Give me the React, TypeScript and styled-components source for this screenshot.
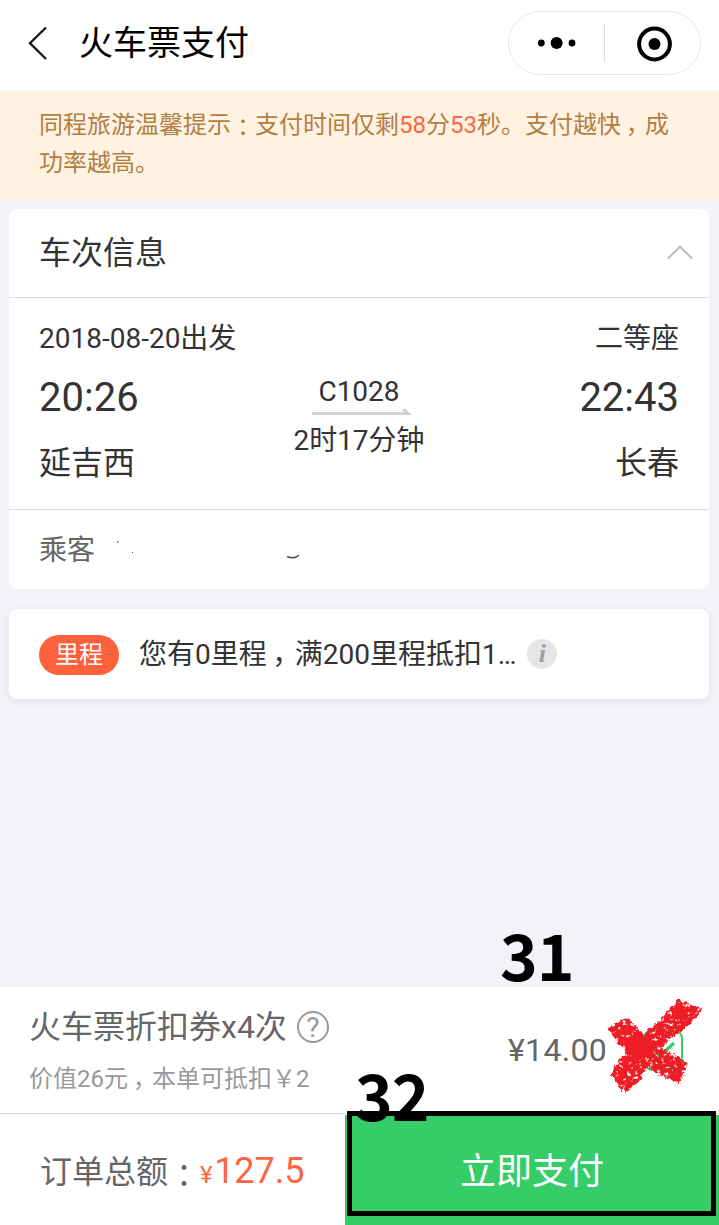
import React from 'react';
import styled, { createGlobalStyle } from 'styled-components';

const GlobalStyle = createGlobalStyle`
  * { box-sizing: border-box; }
  body {
    margin: 0;
    background: #f2f3f8;
    font-family: Roboto, "Noto Sans CJK SC", sans-serif;
    color: #333;
  }
`;

const Page = styled.div`
  position: relative;
  display: flex;
  flex-direction: column;
  width: 719px;
  height: 1225px;
  background: #f2f3f8;
  overflow: hidden;
`;

const NavBar = styled.header`
  display: flex;
  align-items: center;
  height: 91px;
  padding: 0 18px 5px 26px;
  background: #fff;
`;

const BackIcon = styled.svg`
  display: block;
  flex: none;
  width: 24px;
  height: 36px;
`;

const NavTitle = styled.h1`
  flex: 1;
  margin: 0 0 0 29px;
  font-size: 34px;
  line-height: 40px;
  font-weight: 400;
  color: #000;
`;

const Capsule = styled.div`
  display: flex;
  align-items: center;
  width: 193px;
  height: 64px;
  border: 1px solid #e6e6e6;
  border-radius: 32px;
`;

const CapsuleIcon = styled.svg`
  display: block;
  flex: 1;
  height: 62px;
`;

const CapsuleRule = styled.span`
  width: 1px;
  height: 38px;
  background: #dcdcdc;
`;

const Notice = styled.p`
  height: 108px;
  margin: 0;
  padding: 15px 40px 0 39px;
  background: #fff2e0;
  color: #b07f47;
  font-size: 24px;
  line-height: 38px;
`;

const Accent = styled.span`
  color: #ff6540;
`;

const Comma = styled.span`
  margin-left: 0.2em;
  margin-right: -0.2em;
`;

const Colon = styled.span`
  font-family: "Noto Sans CJK TC", sans-serif;
  line-height: 0;
  vertical-align: -0.12em;
`;

const Card = styled.section<{ $raised?: boolean }>`
  margin: ${p => (p.$raised ? '20px' : '10px')} 10px 0 9px;
  background: #fff;
  border-radius: 8px;
  box-shadow: ${p => (p.$raised ? '0 2px 10px rgba(0, 0, 0, 0.07)' : 'none')};
`;

const CardHead = styled.div`
  display: flex;
  align-items: center;
  justify-content: space-between;
  height: 89px;
  padding: 0 16px 0 30px;
  border-bottom: 1px solid #dcdcdc;
  font-size: 32px;
  line-height: 40px;
`;

const Chevron = styled.svg`
  display: block;
  width: 26px;
  height: 16px;
  margin-bottom: 2px;
`;

const Trip = styled.div`
  display: flex;
  justify-content: space-between;
  height: 212px;
  padding: 21px 30px 0 30px;
  border-bottom: 1px solid #dcdcdc;
`;

const TripEnd = styled.div<{ $align: 'left' | 'right' }>`
  width: 220px;
  text-align: ${p => p.$align};
`;

const Meta = styled.div`
  font-size: 28px;
  line-height: 40px;
`;

const Clock = styled.div`
  margin-top: 15px;
  font-size: 40px;
  line-height: 48px;
`;

const Station = styled.div`
  margin-top: 21px;
  font-size: 32px;
  line-height: 40px;
`;

const TripMiddle = styled.div`
  display: flex;
  flex-direction: column;
  align-items: center;
  padding-top: 53px;
`;

const TripArrow = styled.svg`
  display: block;
  margin: -4px 0 5px 5px;
  width: 100px;
  height: 8px;
`;

const PassengerRow = styled.div`
  display: flex;
  align-items: center;
  height: 79px;
  padding: 2px 0 0 30px;
  font-size: 28px;
  line-height: 40px;
  color: #666;
`;

const Remnants = styled.svg`
  display: block;
  margin: -4px 0 0 16px;
  width: 200px;
  height: 40px;
`;

const MileageRow = styled.div`
  display: flex;
  align-items: center;
  height: 90px;
  padding: 1px 0 0 30px;
  font-size: 28px;
  line-height: 40px;
`;

const Badge = styled.span`
  width: 80px;
  height: 40px;
  margin: 1px 20px 0 0;
  border-radius: 20px;
  background: #ff613c;
  color: #fff;
  font-size: 24px;
  line-height: 40px;
  text-align: center;
`;

const InfoDot = styled.span`
  width: 30px;
  height: 30px;
  margin: 0 0 1px 11px;
  border-radius: 50%;
  background: #e6e6e6;
  color: #a0a0a0;
  font: italic bold 26px/29px "Liberation Serif", serif;
  text-align: center;
`;

const Spacer = styled.div`
  flex: 1;
`;

const Coupon = styled.section`
  display: flex;
  justify-content: space-between;
  height: 127px;
  padding: 20px 36px 0 29px;
  background: #fff;
  border-bottom: 1px solid #dcdcdc;
`;

const CouponName = styled.div`
  display: flex;
  align-items: center;
  font-size: 32px;
  line-height: 40px;
  color: #666;
`;

const CouponNote = styled.div`
  margin-top: 14px;
  font-size: 24px;
  line-height: 36px;
  color: #999;
`;

const HelpIcon = styled.span`
  width: 32px;
  height: 32px;
  margin: 0 0 0 10px;
  border: 2px solid #999;
  border-radius: 50%;
  color: #999;
  font-size: 28px;
  line-height: 29px;
  text-align: center;
`;

const CouponPick = styled.div`
  display: flex;
  align-items: center;
  height: 86px;
  gap: 36px;
  font-size: 32px;
  letter-spacing: 0.3px;
  color: #666;
`;

const CheckBox = styled.svg`
  display: block;
  width: 40px;
  height: 40px;
`;

const PayBar = styled.footer`
  display: flex;
  height: 111px;
  background: #fff;
`;

const Total = styled.div`
  display: flex;
  align-items: baseline;
  width: 345px;
  padding: 35px 0 0 40px;
  font-size: 32px;
  line-height: 44px;
  color: #666;
  white-space: nowrap;
`;

const Price = styled.span<{ $size: number }>`
  color: #ff6540;
  font-size: ${p => p.$size}px;
  letter-spacing: ${p => (p.$size < 30 ? 1.5 : 0)}px;
`;

const PayButton = styled.button`
  flex: 1;
  margin-top: 1px;
  padding: 3px 0 0 0;
  border: 0;
  background: #36cc68;
  color: #fff;
  font: 400 36px/44px Roboto, "Noto Sans CJK SC", sans-serif;
`;

/* Hand-placed tutorial marks lying over the page */
const StepNumber = styled.span<{ $x: number; $y: number }>`
  position: absolute;
  left: ${p => p.$x}px;
  top: ${p => p.$y}px;
  font: bold 64px/64px "Noto Sans CJK SC", sans-serif;
  letter-spacing: -1px;
  color: #000;
`;

const Frame = styled.div`
  position: absolute;
  left: 347px;
  top: 1111px;
  width: 369px;
  height: 105px;
  border: 5px solid #000;
`;

const Crayon = styled.svg`
  position: absolute;
  left: 600px;
  top: 992px;
  width: 110px;
  height: 108px;
`;

export default function App() {
  return (
    <Page>
      <GlobalStyle />
      <NavBar>
        <BackIcon viewBox="0 0 24 36" fill="none" stroke="#1a1a1a" strokeWidth="2.4">
          <path d="M20 2.500 4 18.200 20 34" />
        </BackIcon>
        <NavTitle>火车票支付</NavTitle>
        <Capsule>
          <CapsuleIcon viewBox="0 0 95 62">
            <circle cx="32.3" cy="31" r="3.4" />
            <circle cx="47.6" cy="31" r="6" />
            <circle cx="63" cy="31" r="3.4" />
          </CapsuleIcon>
          <CapsuleRule />
          <CapsuleIcon viewBox="0 0 95 62">
            <circle cx="49.5" cy="32" r="15.4" fill="none" stroke="#000" strokeWidth="4" />
            <circle cx="49.5" cy="32" r="6" />
          </CapsuleIcon>
        </Capsule>
      </NavBar>

      <Notice>
        同程旅游温馨提示<Colon>：</Colon>支付时间仅剩<Accent>58</Accent>分<Accent>53</Accent>秒。支付越快<Comma>，</Comma>成功率越高。
      </Notice>

      <Card>
        <CardHead>
          车次信息
          <Chevron viewBox="0 0 26 16" fill="none" stroke="#bdbdbd" strokeWidth="2">
            <path d="M1 14.500 13 2.500 25 14.500" />
          </Chevron>
        </CardHead>
        <Trip>
          <TripEnd $align="left">
            <Meta>2018-08-20出发</Meta>
            <Clock>20:26</Clock>
            <Station>延吉西</Station>
          </TripEnd>
          <TripMiddle>
            <Meta>C1028</Meta>
            <TripArrow viewBox="0 0 100 8" fill="#d2d2d2">
              <path d="M0 4H93L90 2.500 92.500 0 100 7H0Z" />
            </TripArrow>
            <Meta>2时17分钟</Meta>
          </TripMiddle>
          <TripEnd $align="right">
            <Meta>二等座</Meta>
            <Clock>22:43</Clock>
            <Station>长春</Station>
          </TripEnd>
        </Trip>
        <PassengerRow>
          乘客
          <Remnants viewBox="0 0 200 40" fill="none" stroke="#555">
            <path d="M6 13.500 8 12.500M21 23.500H22" />
            <path d="M176 27.500C180 29.500 186 29 187.500 26" strokeWidth="1.6" />
          </Remnants>
        </PassengerRow>
      </Card>

      <Card $raised>
        <MileageRow>
          <Badge>里程</Badge>
          <span>您有0里程<Comma>，</Comma>满200里程抵扣1…</span>
          <InfoDot>i</InfoDot>
        </MileageRow>
      </Card>

      <Spacer />

      <Coupon>
        <div>
          <CouponName>
            火车票折扣券x4次
            <HelpIcon>?</HelpIcon>
          </CouponName>
          <CouponNote>价值26元<Comma>，</Comma>本单可抵扣￥2</CouponNote>
        </div>
        <CouponPick>
          ¥14.00
          <CheckBox viewBox="0 0 40 40" fill="none" stroke="#36cc68">
            <rect x="1" y="1" width="38" height="38" rx="7" strokeWidth="2" />
            <path d="M9 18 17 26 31 13" strokeWidth="3.4" />
          </CheckBox>
        </CouponPick>
      </Coupon>
      <PayBar>
        <Total>
          <span>订单总额<Colon>：</Colon></span>
          <Price $size={24}>¥</Price>
          <Price $size={36}>127.5</Price>
        </Total>
        <PayButton>立即支付</PayButton>
      </PayBar>

      <Frame />
      <StepNumber $x={500} $y={921}>31</StepNumber>
      <StepNumber $x={355} $y={1061}>32</StepNumber>
      <Crayon viewBox="600 992 110 108">
        <defs>
          <filter id="crayon" x="-10%" y="-10%" width="120%" height="120%" colorInterpolationFilters="sRGB">
            <feTurbulence type="fractalNoise" baseFrequency="0.26" numOctaves="2" seed="4" result="noise" />
            <feDisplacementMap in="SourceGraphic" in2="noise" scale="6" xChannelSelector="R" yChannelSelector="B" result="rough" />
            <feColorMatrix in="noise" type="matrix" values="0 0 0 0 0  0 0 0 0 0  0 0 0 0 0  0 -5 0 0 3.9" result="grain" />
            <feComposite in="rough" in2="grain" operator="in" />
            <feGaussianBlur stdDeviation="0.5" />
          </filter>
        </defs>
        <g fill="#ee1c25">
          <g filter="url(#crayon)">
            <path d="M607 1028 628 1018C637 1030 648 1037 658 1046L688 1063 680 1084C663 1077 646 1067 634 1059 624 1050 614 1038 607 1028Z" />
            <path d="M678 999 702 1009C696 1021 684 1029 673 1037 659 1048 645 1066 640 1081L624 1093 611 1076C615 1062 625 1050 637 1040 653 1028 666 1015 678 999Z" />
          </g>
          <path d="M627 1040C637 1034 649 1037 657 1043 652 1052 644 1061 636 1059 627 1054 622 1048 627 1040Z" />
        </g>
      </Crayon>
    </Page>
  );
}
